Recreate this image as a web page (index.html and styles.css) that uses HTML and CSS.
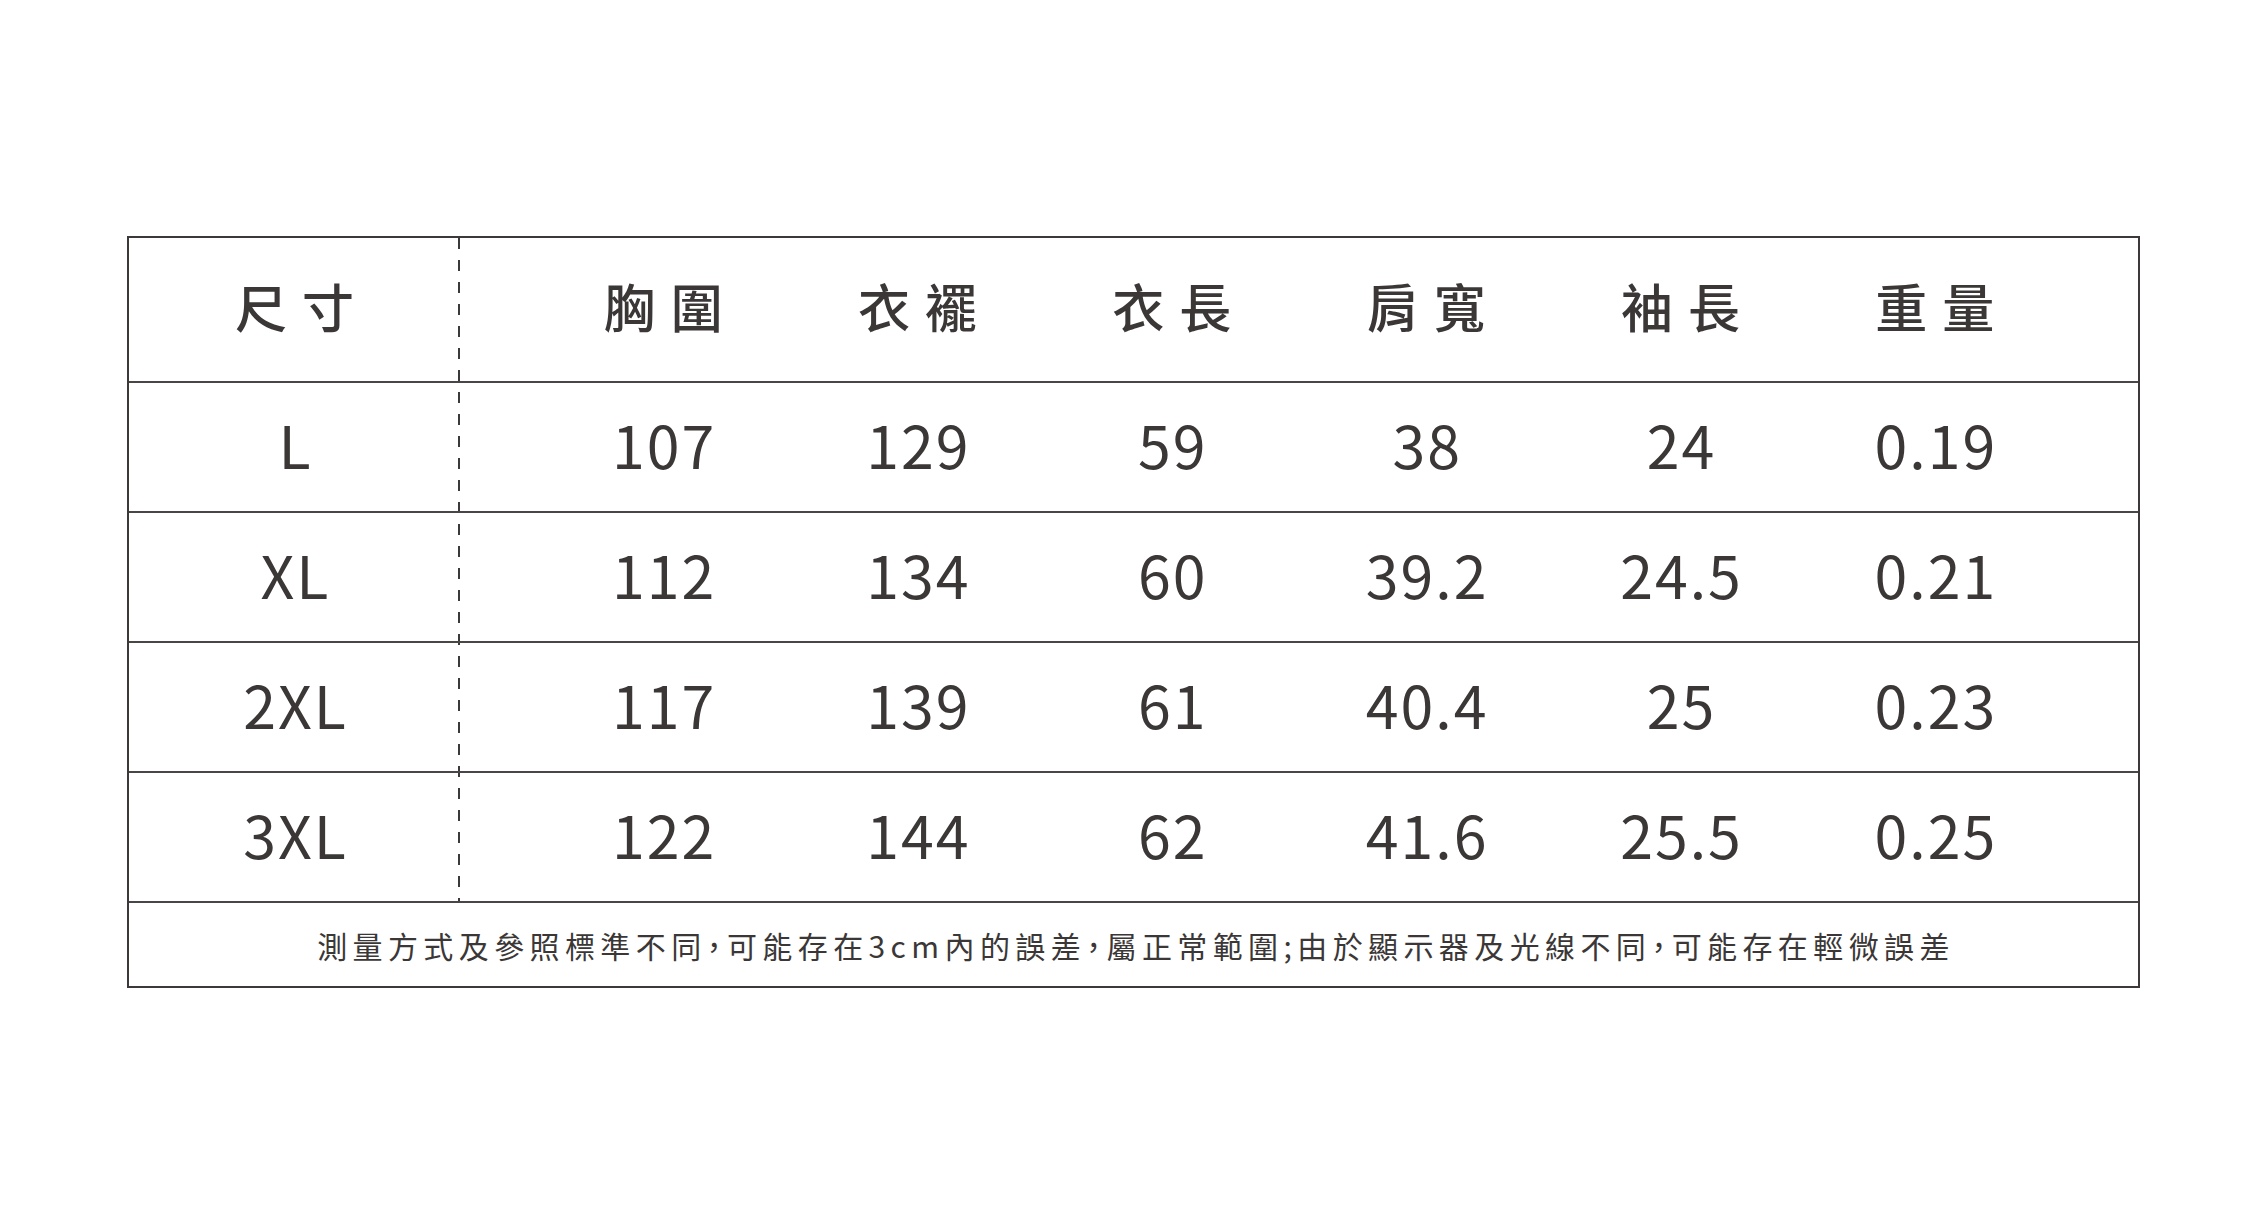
FILE: index.html
```html
<!DOCTYPE html>
<html lang="zh-Hant">
<head>
<meta charset="utf-8">
<title>尺寸表</title>
<link rel="stylesheet" href="styles.css">
</head>
<body>
<div class="chart">
  <div class="grid">
    <div class="row head">
      <div class="size">尺寸</div>
      <div class="vals">
        <span>胸圍</span><span>衣襬</span><span>衣長</span><span>肩寬</span><span>袖長</span><span>重量</span>
      </div>
    </div>
    <div class="row">
      <div class="size">L</div>
      <div class="vals"><span>107</span><span>129</span><span>59</span><span>38</span><span>24</span><span>0.19</span></div>
    </div>
    <div class="row">
      <div class="size">XL</div>
      <div class="vals"><span>112</span><span>134</span><span>60</span><span>39.2</span><span>24.5</span><span>0.21</span></div>
    </div>
    <div class="row">
      <div class="size">2XL</div>
      <div class="vals"><span>117</span><span>139</span><span>61</span><span>40.4</span><span>25</span><span>0.23</span></div>
    </div>
    <div class="row">
      <div class="size">3XL</div>
      <div class="vals"><span>122</span><span>144</span><span>62</span><span>41.6</span><span>25.5</span><span>0.25</span></div>
    </div>
  </div>
  <div class="note">測量方式及參照標準不同<span class="p">，</span>可能存在3cm內的誤差<span class="p">，</span>屬正常範圍;由於顯示器及光線不同<span class="p">，</span>可能存在輕微誤差</div>
</div>
</body>
</html>
```
FILE: styles.css
```css
html, body {
  margin: 0;
  padding: 0;
  background: #ffffff;
}
body {
  font-family: "Noto Sans CJK TC", "Noto Sans", sans-serif;
  color: #3b3737;
}
.chart {
  box-sizing: border-box;
  width: 2013px;
  margin: 236px 0 0 127px;
  border: 2px solid #3d3939;
}
.grid {
  background-image: repeating-linear-gradient(to bottom, #3d3939 0 11px, transparent 11px 22px);
  background-size: 2px 100%;
  background-position: 329px 0;
  background-repeat: no-repeat;
}
.row {
  box-sizing: border-box;
  display: grid;
  grid-template-columns: 331px 1fr;
  height: 130px;
  border-bottom: 2px solid #4a4646;
  align-items: center;
}
.row.head {
  height: 145px;
}
.size, .vals span {
  text-align: center;
}
.vals {
  display: grid;
  grid-template-columns: repeat(6, 1fr);
  padding: 0 76px;
}
.row .size, .row .vals span {
  font-size: 59px;
  letter-spacing: 2px;
  padding-left: 2px;
  line-height: 1;
  padding-bottom: 8px;
}
.row.head .size, .row.head .vals span {
  font-size: 52px;
  font-weight: 500;
  letter-spacing: 15px;
  padding-left: 15px;
  padding-bottom: 8px;
}
.note {
  height: 83px;
  display: flex;
  align-items: center;
  justify-content: center;
  font-size: 30px;
  letter-spacing: 5.4px;
  padding-left: 5px;
  box-sizing: border-box;
}
.note .p {
  font-feature-settings: "halt";
}
```
